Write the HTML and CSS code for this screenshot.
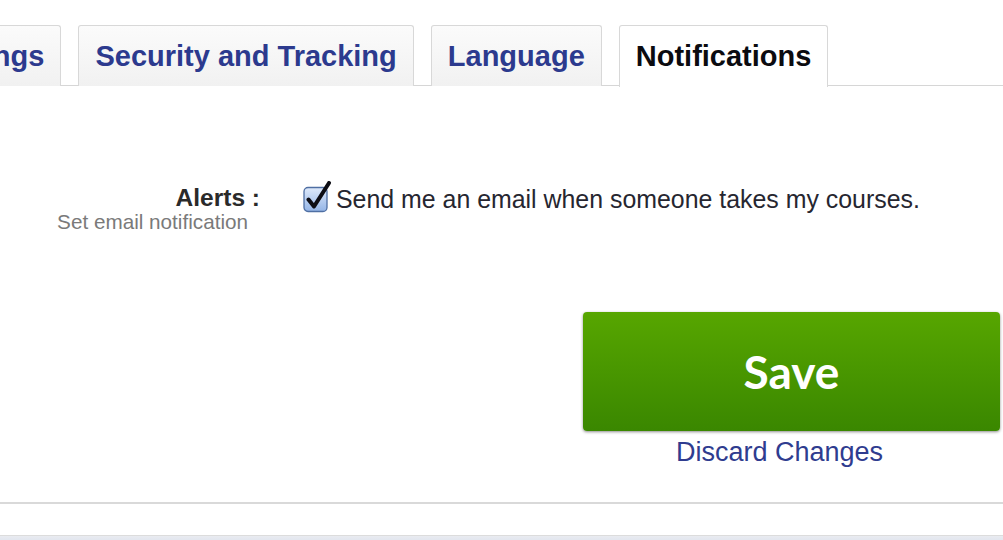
FILE: index.html
```html
<!DOCTYPE html>
<html>
<head>
<meta charset="utf-8">
<link rel="stylesheet" href="styles.css">
</head>
<body>
<div class="page">
  <div class="tabs">
    <div class="tab first">Settings</div>
    <div class="tab">Security and Tracking</div>
    <div class="tab">Language</div>
    <div class="tab active">Notifications</div>
  </div>
  <div class="panel">
    <div class="row">
      <div class="label">
        <div class="label-title">Alerts :</div>
        <div class="label-sub">Set email notification</div>
      </div>
      <div class="field">
        <span class="checkbox">
          <svg width="30" height="32" viewBox="0 0 30 32">
            <defs>
              <linearGradient id="cb" x1="0" y1="0" x2="0" y2="1">
                <stop offset="0" stop-color="#dfeafb"/>
                <stop offset="1" stop-color="#93b4e6"/>
              </linearGradient>
            </defs>
            <rect x="1" y="6.5" width="23" height="24" rx="4" fill="url(#cb)" stroke="#4f6fa3" stroke-width="1.3"/>
            <path d="M5.5 18.5 L11 25.5 L26 2" fill="none" stroke="#0d0d14" stroke-width="4" stroke-linecap="round" stroke-linejoin="round"/>
          </svg>
        </span>
        <span class="field-text">Send me an email when someone takes my courses.</span>
      </div>
    </div>
    <div class="actions">
      <button class="save">Save</button>
      <a class="discard" href="#">Discard Changes</a>
    </div>
  </div>
  <div class="divider"></div>
  <div class="footer"></div>
</div>
</body>
</html>
```

FILE: styles.css
```css
html, body {
  margin: 0;
  padding: 0;
  background: #ffffff;
  overflow: hidden;
}
body {
  font-family: "Liberation Sans", Arial, Helvetica, sans-serif;
  width: 1003px;
  height: 540px;
}
.page {
  width: 1003px;
}
.tabs {
  display: flex;
  gap: 17px;
  padding-top: 25px;
  border-bottom: 1px solid #d6d6d6;
  height: 60px;
  margin-left: -72px;
}
.tab {
  box-sizing: border-box;
  height: 61px;
  padding: 0 16px;
  display: flex;
  align-items: center;
  font-weight: bold;
  font-size: 29px;
  color: #2c3a8e;
  background: linear-gradient(#fbfbfb, #f1f1f1);
  border: 1px solid #d8d8d8;
  border-bottom: none;
  border-radius: 3px 3px 0 0;
  white-space: nowrap;
}
.tab.first {
  padding-left: 1px;
}
.tab.active {
  background: #ffffff;
  color: #0b0b10;
  height: 62px;
  margin-bottom: -1px;
  padding: 0 16px;
}
.panel {
  padding-top: 99px;
}
.row {
  display: flex;
  align-items: flex-start;
}
.label {
  width: 260px;
  text-align: right;
}
.label-title {
  font-weight: bold;
  font-size: 24.5px;
  line-height: 26px;
  color: #2a2a2a;
}
.label-sub {
  font-size: 20.7px;
  line-height: 22px;
  color: #7a7a7a;
  padding-right: 12px;
}
.field {
  display: flex;
  align-items: flex-start;
  margin-left: 43px;
  margin-top: 1px;
}
.checkbox {
  width: 30px;
  height: 32px;
  margin-top: -5px;
  margin-right: 3px;
}
.checkbox svg {
  display: block;
}
.field-text {
  font-size: 24.9px;
  line-height: 26px;
  color: #262630;
}
.actions {
  margin-left: 583px;
  width: 417px;
  margin-top: 79px;
  display: flex;
  flex-direction: column;
}
.save {
  height: 119px;
  width: 417px;
  border: none;
  border-radius: 4px;
  background: linear-gradient(#57a600, #3a8700);
  box-shadow: 0 1px 3px rgba(0, 0, 0, 0.45);
  color: #ffffff;
  font-family: Lato, "Open Sans", sans-serif;
  font-weight: bold;
  font-size: 46px;
  padding: 0;
  cursor: pointer;
}
.discard {
  margin-top: 6px;
  padding-right: 24px;
  text-align: center;
  font-size: 27px;
  line-height: 30px;
  color: #2f3c8f;
  text-decoration: none;
}
.divider {
  margin-top: 35px;
  height: 2px;
  background: #d9d9d9;
}
.footer {
  margin-top: 31px;
  height: 6px;
  border-top: 1px solid #dcdcdc;
  background: linear-gradient(#e9ebf0, #dfe4ee);
}
```
